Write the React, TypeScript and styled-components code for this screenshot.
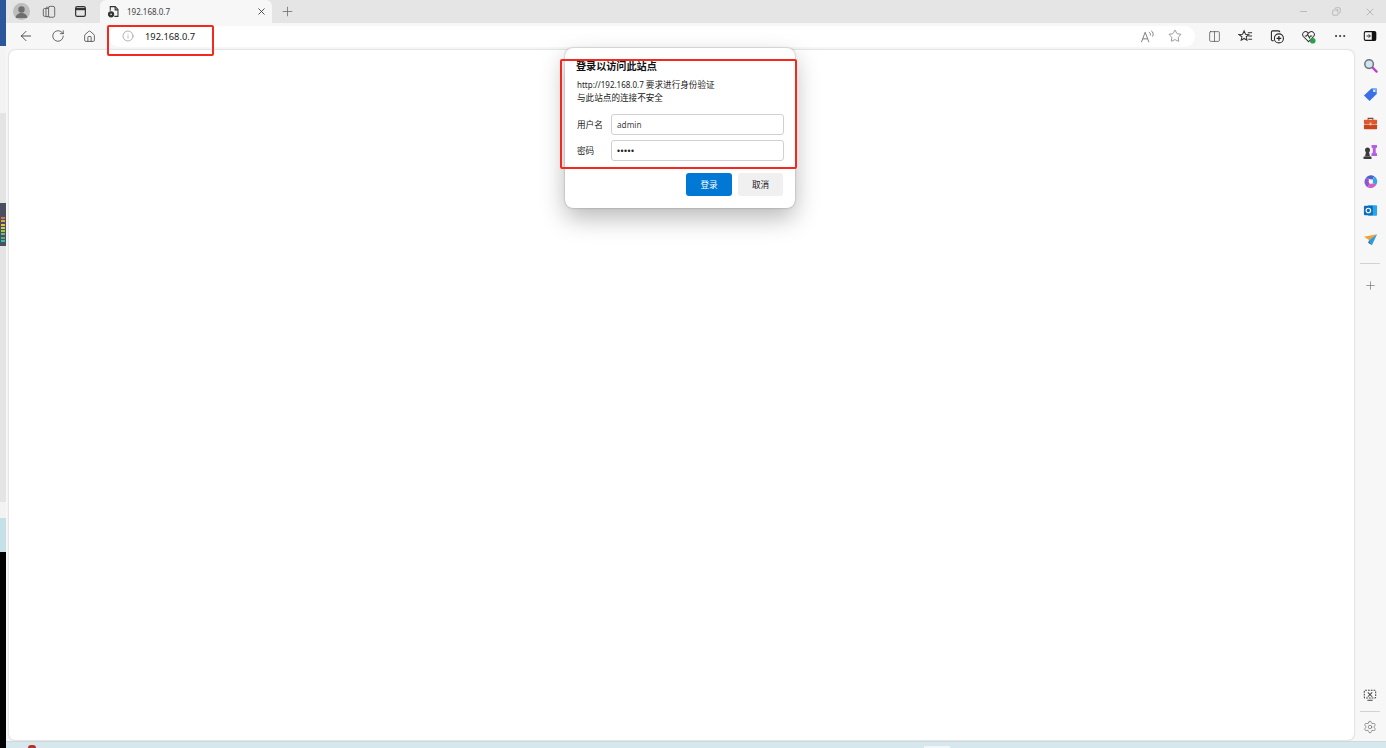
import React from "react";
import styled, { createGlobalStyle } from "styled-components";
import { ArrowLeft, RotateCw, House, Info, Star, X, Plus, Minus, Ellipsis, Settings, Copy, Columns2 } from "lucide-react";

const Global = createGlobalStyle`
  html, body { margin: 0; padding: 0; height: 100%; overflow: hidden; background: #fff; }
  #root { height: 748px; }
  * { box-sizing: border-box; }
`;

const Page = styled.div`
  position: relative;
  display: flex;
  width: 1386px;
  height: 748px;
  overflow: hidden;
  font-family: "Noto Sans", "Noto Sans CJK SC", sans-serif;
  color: #1a1a1a;
`;

const LeftStrip = styled.div`
  width: 6px;
  display: flex;
  flex-direction: column;
  flex: none;
`;

const StripBand = styled.div<{ $h: number; $c: string }>`
  height: ${(p) => p.$h}px;
  background: ${(p) => p.$c};
  flex: none;
`;

const Meter = styled.div`
  height: 43px;
  flex: none;
  background: #4a5062;
  display: flex;
  flex-direction: column;
  justify-content: flex-end;
  gap: 1.3px;
  padding: 0 1px 4px 1px;
`;

const MeterBar = styled.div<{ $c: string }>`
  width: 4px;
  height: 2px;
  background: ${(p) => p.$c};
`;

const Browser = styled.div`
  flex: 1;
  display: flex;
  flex-direction: column;
  min-width: 0;
`;

const TabBar = styled.div`
  height: 23px;
  flex: none;
  background: #e5e5e5;
  display: flex;
  align-items: flex-end;
  padding-left: 4px;
`;

const TabIconBtn = styled.div<{ $w: number }>`
  width: ${(p) => p.$w}px;
  height: 23px;
  display: flex;
  align-items: center;
  justify-content: center;
  flex: none;
  color: #3a3a3a;
`;

const Avatar = styled.div`
  width: 17px;
  height: 17px;
  border-radius: 50%;
  background: #bdbdbd;
  display: flex;
  align-items: center;
  justify-content: center;
  overflow: hidden;
`;

const Tab = styled.div`
  width: 172px;
  height: 23px;
  margin-left: 5px;
  background: #f7f7f7;
  border-radius: 6px 6px 0 0;
  display: flex;
  align-items: center;
  padding: 0 5px 0 7px;
  flex: none;
`;

const TabTitle = styled.span`
  flex: 1;
  font-size: 8px;
  color: #444;
  margin-left: 7px;
`;

const WindowButtons = styled.div`
  margin-left: auto;
  display: flex;
  align-items: center;
  height: 23px;
  color: #8a8a8a;
`;

const WindowBtn = styled.div`
  width: 33px;
  height: 23px;
  display: flex;
  align-items: center;
  justify-content: center;
`;

const ToolBar = styled.div`
  height: 25px;
  flex: none;
  background: #f7f7f7;
  display: flex;
  align-items: center;
  padding: 1px 0 0 4px;
`;

const NavBtn = styled.div<{ $w?: number }>`
  width: ${(p) => p.$w ?? 31.5}px;
  height: 24px;
  display: flex;
  align-items: center;
  justify-content: center;
  flex: none;
  color: #2e2e2e;
`;

const AddressBar = styled.div`
  width: 1086px;
  height: 21px;
  margin-left: 5px;
  background: #fff;
  border-radius: 11px;
  display: flex;
  align-items: center;
  padding: 0 6px 0 13px;
  flex: none;
`;

const Url = styled.span`
  font-size: 9.3px;
  color: #222;
  margin-left: 11px;
  flex: 1;
`;

const Main = styled.div`
  flex: 1;
  display: flex;
  min-height: 0;
  background: #f7f7f7;
`;

const Content = styled.div`
  flex: 1;
  margin: 2px 0 1px 3px;
  background: #fff;
  border-radius: 6px;
  box-shadow: 0 0 2px rgba(0, 0, 0, 0.28);
`;

const SideBar = styled.div`
  width: 32px;
  flex: none;
  display: flex;
  flex-direction: column;
  align-items: center;
  padding-top: 2.5px;
`;

const SideBtn = styled.div`
  width: 31px;
  height: 29px;
  display: flex;
  align-items: center;
  justify-content: center;
  flex: none;
  color: #555;
`;

const CaptureBtn = styled(SideBtn)`
  margin-bottom: 2px;
`;

const SideRule = styled.hr<{ $top: number; $bottom: number }>`
  width: 20px;
  border: 0;
  border-top: 1px solid #d2d2d2;
  margin: ${(p) => p.$top}px 0 ${(p) => p.$bottom}px;
  flex: none;
`;

const SideSpacer = styled.div`
  flex: 1;
`;

const BottomStrip = styled.div`
  height: 7px;
  flex: none;
  background: #d6e8ee;
  box-shadow: inset 0 1px 0 #cfd8da;
  position: relative;
`;

const Dialog = styled.div`
  position: absolute;
  left: 565px;
  top: 48px;
  width: 230px;
  height: 160px;
  background: #fff;
  border-radius: 8px;
  box-shadow: 0 10px 24px rgba(0, 0, 0, 0.28), 0 0 2px rgba(0, 0, 0, 0.35);
  padding: 11px 11px 0 11px;
  display: flex;
  flex-direction: column;
`;

const DialogTitle = styled.div`
  font-size: 10.1px;
  font-weight: 700;
  line-height: 14px;
  color: #111;
`;

const DialogText = styled.div`
  margin-top: 6px;
  font-size: 8.6px;
  line-height: 12.5px;
  color: #222;
  padding-left: 1px;
`;

const Latin = styled.span`
  font-size: 8px;
`;

const Field = styled.div<{ $top: number }>`
  display: flex;
  align-items: center;
  margin-top: ${(p) => p.$top}px;
  height: 21px;
  padding-left: 1px;
`;

const FieldLabel = styled.label`
  width: 34px;
  font-size: 8.6px;
  color: #222;
  flex: none;
`;

const Input = styled.div`
  width: 173px;
  height: 21px;
  border: 1px solid #d0d0d0;
  border-radius: 3px;
  background: #fff;
  font-size: 8.2px;
  color: #444;
  display: flex;
  align-items: center;
  padding-left: 5px;
  flex: none;
`;

const Dots = styled.span`
  font-size: 8.6px;
  letter-spacing: 0.5px;
  color: #222;
  font-family: "Liberation Sans", sans-serif;
`;

const ButtonRow = styled.div`
  display: flex;
  justify-content: flex-end;
  gap: 6px;
  margin-top: 12px;
  padding-right: 1px;
`;

const DialogButton = styled.div<{ $primary?: boolean }>`
  width: ${(p) => (p.$primary ? 46 : 45)}px;
  height: 23px;
  border-radius: 3px;
  background: ${(p) => (p.$primary ? "#0078d4" : "#f0f0f0")};
  color: ${(p) => (p.$primary ? "#fff" : "#222")};
  font-size: 8.6px;
  display: flex;
  align-items: center;
  justify-content: center;
`;

const Annotation = styled.div<{ $x: number; $y: number; $w: number; $h: number }>`
  position: absolute;
  left: ${(p) => p.$x}px;
  top: ${(p) => p.$y}px;
  width: ${(p) => p.$w}px;
  height: ${(p) => p.$h}px;
  border: 2px solid #f5281e;
  border-radius: 2px;
  pointer-events: none;
`;

const TaskDot = styled.div`
  position: absolute;
  left: 22px;
  bottom: 0;
  width: 8px;
  height: 3px;
  border-radius: 4px 4px 0 0;
  background: #b8302a;
`;

const TaskChip = styled.div`
  position: absolute;
  left: 918px;
  bottom: 0;
  width: 26px;
  height: 2px;
  background: #f2f6f7;
`;

const meterColors = ["#e0743a", "#e8a33a", "#e6c63a", "#c8cf3e", "#9dcb4a", "#6cc060", "#3fb88a", "#2cc0a8"];

const TabPageIcon = () => (
  <svg width="13" height="13" viewBox="0 0 16 16" fill="none" stroke="#333" strokeWidth="1.3">
    <path d="M4 7V2h6l3.500 3.500V14H9" />
    <path d="M10 2v4h3.500" />
    <circle cx="5" cy="11.500" r="3.200" fill="#333" />
    <circle cx="5" cy="11.500" r="1" fill="#f7f7f7" stroke="none" />
  </svg>
);

const Workspaces = () => (
  <svg width="14" height="14" viewBox="0 0 16 16" fill="none" stroke="#666" strokeWidth="1.100">
    <rect x="1.500" y="4" width="7" height="9" rx="1.500" />
    <rect x="4.500" y="2.500" width="7" height="11" rx="1.500" />
    <rect x="7.500" y="1.500" width="7" height="12.500" rx="2" fill="#e5e5e5" />
  </svg>
);

const VerticalTabs = () => (
  <svg width="13" height="13" viewBox="0 0 16 16" fill="none" stroke="#333" strokeWidth="1.500">
    <rect x="2" y="2" width="12" height="12" rx="2" />
    <path d="M2 5h12" strokeWidth="2.800" />
  </svg>
);

const ReadAloud = () => (
  <svg width="15" height="15" viewBox="0 0 16 16" fill="none" stroke="#777" strokeWidth="1">
    <path d="M1.500 14L5.500 3.500 9.500 14M3 10.500h5" />
    <path d="M9.500 3.500c1.500.5 2 2 1.500 3.500M12 2c2 1 2.500 3.500 1.500 6" />
  </svg>
);

const Favorites = () => (
  <svg width="15" height="15" viewBox="0 0 16 16" fill="none" stroke="#333" strokeWidth="1.100">
    <path d="M6.500 2l1.500 3.500 3.500.4-2.700 2.400.8 3.700-3.100-1.900-3.100 1.900.8-3.700L1 5.900l3.900-.4z" />
    <path d="M10.500 4H15M11 7.500h4M11 11h4" />
  </svg>
);

const Collections = () => (
  <svg width="15" height="15" viewBox="0 0 16 16" fill="none" stroke="#222" strokeWidth="1.100">
    <path d="M4 12.500H3a1.500 1.500 0 0 1-1.500-1.500V3.500A1.500 1.500 0 0 1 3 2h6a1.500 1.500 0 0 1 1.500 1.500" />
    <circle cx="9.500" cy="10" r="4.800" />
    <path d="M9.500 7.500v5M7 10h5" strokeWidth="1.300" />
  </svg>
);

const Health = () => (
  <svg width="15" height="15" viewBox="0 0 16 16" fill="none" stroke="#333" strokeWidth="1.100">
    <path d="M8 13.500L2.500 8A3.200 3.200 0 0 1 7 3.500l1 1 1-1A3.200 3.200 0 0 1 13.500 8z" />
    <path d="M4 7.500h2l1-2 2 4 1-2h2" />
    <circle cx="12.500" cy="12.500" r="3" fill="#2c9e47" stroke="none" />
  </svg>
);

const SidebarToggle = () => (
  <svg width="14" height="14" viewBox="0 0 16 16">
    <rect x="1.500" y="3" width="13" height="10" rx="1.500" fill="none" stroke="#111" strokeWidth="1.200" />
    <rect x="10" y="3" width="5" height="10" rx="1" fill="#111" />
    <path d="M4 8h4M6.500 6l2 2-2 2" fill="none" stroke="#111" strokeWidth="1" />
  </svg>
);

const SearchColor = () => (
  <svg width="15" height="15" viewBox="0 0 16 16">
    <path d="M10 10l4.500 4.500" stroke="#c43ccf" strokeWidth="2.400" strokeLinecap="round" />
    <circle cx="6.500" cy="6.500" r="4.600" fill="#cfe6f2" stroke="#6f7478" strokeWidth="1.600" />
  </svg>
);

const TagColor = () => (
  <svg width="15" height="15" viewBox="0 0 16 16">
    <path d="M9 1.500h5a.8.8 0 0 1 .8.8v5L7 15 1 9z" fill="#3b6fe8" />
    <path d="M9 1.500h5.800v5.800L12 4z" fill="#6fb2f5" />
    <circle cx="11.800" cy="4.200" r="1.100" fill="#fff" />
  </svg>
);

const Toolbox = () => (
  <svg width="15" height="15" viewBox="0 0 16 16">
    <path d="M5.500 4V2.500h5V4" fill="none" stroke="#7a4a36" strokeWidth="1.200" />
    <rect x="1" y="4" width="14" height="4.500" rx=".8" fill="#dd5a30" />
    <rect x="1" y="9" width="14" height="5" rx=".8" fill="#c9461f" />
    <rect x="7" y="7" width="2" height="3" fill="#f3c8a0" />
  </svg>
);

const Chess = () => (
  <svg width="16" height="16" viewBox="0 0 16 16">
    <circle cx="5.500" cy="6" r="2.500" fill="#3b3b3b" />
    <path d="M4 8h3l1 4.500H3z" fill="#3b3b3b" />
    <rect x="1.500" y="12.500" width="8" height="2.500" rx=".6" fill="#3b3b3b" />
    <path d="M9.500 1h5.500v2.500l-1.300.8v4.400l1.300.8V12H9.500V9.500l1.300-.8V4.300l-1.300-.8z" fill="#b45fe6" />
  </svg>
);

const M365 = () => (
  <svg width="15" height="15" viewBox="0 0 16 16" fill="none">
    <path d="M2.500 5A6.500 6.500 0 0 1 12 2.500L10 6 6 5z" fill="#4f5fcf" />
    <path d="M12 2.500a6.500 6.500 0 0 1 2.500 8.500L10.500 10V6z" fill="#35a5e2" />
    <path d="M14.500 11A6.500 6.500 0 0 1 5 14l2-3.500 3.500-.5z" fill="#d060c8" />
    <path d="M5 14a6.500 6.500 0 0 1-2.500-9L6 5l1 5.500z" fill="#8a57d0" />
    <circle cx="8" cy="8" r="2" fill="#f7f7f7" />
  </svg>
);

const Outlook = () => (
  <svg width="15" height="15" viewBox="0 0 16 16">
    <rect x="5" y="2.500" width="10" height="11" rx="1" fill="#28a8ea" />
    <rect x="1" y="3" width="9.500" height="10" rx="1" fill="#0f6cbd" />
    <circle cx="5.700" cy="8" r="2.400" fill="none" stroke="#fff" strokeWidth="1.300" />
  </svg>
);

const SendPlane = () => (
  <svg width="15" height="15" viewBox="0 0 16 16">
    <path d="M1 5l14-2.500L6.500 8.500z" fill="#f3a22c" />
    <path d="M15 2.500L6.500 8.500 9.500 14z" fill="#2e9bdf" />
    <path d="M6.500 8.500L9.500 14 5.500 11.500z" fill="#1b6fa8" />
  </svg>
);

const ScreenCapture = () => (
  <svg width="14" height="14" viewBox="0 0 16 16" fill="none" stroke="#444" strokeWidth="1.200">
    <rect x="1.500" y="2.500" width="13" height="9" rx="1" strokeDasharray="2 1.200" />
    <path d="M5.500 5l5 5M10.500 5l-5 5M5 14h6" />
  </svg>
);

const ReaderBtn = styled(NavBtn)`
  margin-left: 4px;
`;

const RestoreIcon = styled(Copy)`
  transform: scaleX(-1);
`;

const App: React.FC = () => (
  <Page>
    <Global />
    <LeftStrip>
      <StripBand $h={46} $c="#2b579a" />
      <StripBand $h={67} $c="#f3f3f3" />
      <StripBand $h={90} $c="#e4e4e4" />
      <Meter>
        {meterColors.map((c) => (
          <MeterBar key={c} $c={c} />
        ))}
      </Meter>
      <StripBand $h={256} $c="#e4e4e4" />
      <StripBand $h={16} $c="#f3f3f3" />
      <StripBand $h={34} $c="#c5e0e6" />
      <StripBand $h={196} $c="#000" />
    </LeftStrip>
    <Browser>
      <TabBar>
        <TabIconBtn $w={23}>
          <Avatar>
            <svg width="17" height="17" viewBox="0 0 17 17">
              <circle cx="8.500" cy="6.500" r="3.200" fill="#6e6e6e" />
              <path d="M2.500 15c.5-3.500 3-5 6-5s5.500 1.500 6 5z" fill="#6e6e6e" />
            </svg>
          </Avatar>
        </TabIconBtn>
        <TabIconBtn $w={32}>
          <Workspaces />
        </TabIconBtn>
        <TabIconBtn $w={30}>
          <VerticalTabs />
        </TabIconBtn>
        <Tab>
          <TabPageIcon />
          <TabTitle>192.168.0.7</TabTitle>
          <X size={11} color="#444" />
        </Tab>
        <TabIconBtn $w={30}>
          <Plus size={15} strokeWidth={1.2} color="#666" />
        </TabIconBtn>
        <WindowButtons>
          <WindowBtn>
            <Minus size={11} strokeWidth={1} />
          </WindowBtn>
          <WindowBtn>
            <RestoreIcon size={9} strokeWidth={1.2} />
          </WindowBtn>
          <WindowBtn>
            <X size={12} strokeWidth={1} />
          </WindowBtn>
        </WindowButtons>
      </TabBar>
      <ToolBar>
        <NavBtn $w={32}>
          <ArrowLeft size={16} strokeWidth={1.2} />
        </NavBtn>
        <NavBtn $w={32}>
          <RotateCw size={14} strokeWidth={1.2} />
        </NavBtn>
        <NavBtn $w={30}>
          <House size={13} strokeWidth={1.3} />
        </NavBtn>
        <AddressBar>
          <Info size={12} strokeWidth={1} color="#666" />
          <Url>192.168.0.7</Url>
          <NavBtn $w={28}>
            <ReadAloud />
          </NavBtn>
          <NavBtn $w={28}>
            <Star size={14} strokeWidth={1} color="#555" />
          </NavBtn>
        </AddressBar>
        <ReaderBtn $w={31}>
          <Columns2 size={13} strokeWidth={1.1} />
        </ReaderBtn>
        <NavBtn>
          <Favorites />
        </NavBtn>
        <NavBtn>
          <Collections />
        </NavBtn>
        <NavBtn>
          <Health />
        </NavBtn>
        <NavBtn $w={30}>
          <Ellipsis size={14} strokeWidth={1.6} />
        </NavBtn>
        <NavBtn $w={31}>
          <SidebarToggle />
        </NavBtn>
      </ToolBar>
      <Main>
        <Content />
        <SideBar>
          <SideBtn>
            <SearchColor />
          </SideBtn>
          <SideBtn>
            <TagColor />
          </SideBtn>
          <SideBtn>
            <Toolbox />
          </SideBtn>
          <SideBtn>
            <Chess />
          </SideBtn>
          <SideBtn>
            <M365 />
          </SideBtn>
          <SideBtn>
            <Outlook />
          </SideBtn>
          <SideBtn>
            <SendPlane />
          </SideBtn>
          <SideRule $top={9} $bottom={7} />
          <SideBtn>
            <Plus size={13} strokeWidth={1} />
          </SideBtn>
          <SideSpacer />
          <CaptureBtn>
            <ScreenCapture />
          </CaptureBtn>
          <SideRule $top={0} $bottom={0} />
          <SideBtn>
            <Settings size={14} strokeWidth={1} />
          </SideBtn>
        </SideBar>
      </Main>
      <BottomStrip>
        <TaskDot />
        <TaskChip />
      </BottomStrip>
    </Browser>
    <Dialog>
      <DialogTitle>登录以访问此站点</DialogTitle>
      <DialogText>
        <Latin>http://192.168.0.7 </Latin>要求进行身份验证
        <br />
        与此站点的连接不安全
      </DialogText>
      <Field $top={10}>
        <FieldLabel>用户名</FieldLabel>
        <Input>admin</Input>
      </Field>
      <Field $top={5}>
        <FieldLabel>密码</FieldLabel>
        <Input>
          <Dots>•••••</Dots>
        </Input>
      </Field>
      <ButtonRow>
        <DialogButton $primary>登录</DialogButton>
        <DialogButton>取消</DialogButton>
      </ButtonRow>
    </Dialog>
    <Annotation $x={107} $y={25} $w={107} $h={31} />
    <Annotation $x={560} $y={59} $w={237} $h={110} />
  </Page>
);

export default App;
